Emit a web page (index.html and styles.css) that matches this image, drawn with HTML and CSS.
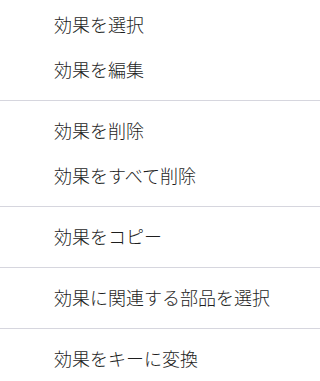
FILE: index.html
```html
<!DOCTYPE html>
<html lang="ja">
<head>
<meta charset="utf-8">
<link rel="stylesheet" href="styles.css">
</head>
<body>
<ul class="menu">
  <li class="item">効果を選択</li>
  <li class="item">効果を編集</li>
  <li class="sep"></li>
  <li class="item">効果を削除</li>
  <li class="item">効果をすべて削除</li>
  <li class="sep"></li>
  <li class="item">効果をコピー</li>
  <li class="sep"></li>
  <li class="item">効果に関連する部品を選択</li>
  <li class="sep"></li>
  <li class="item">効果をキーに変換</li>
</ul>
</body>
</html>
```
FILE: styles.css
```css
html, body {
  margin: 0;
  padding: 0;
  background: #ffffff;
}
.menu {
  list-style: none;
  margin: 0;
  padding: 2px 0 0 0;
  font-family: "Noto Sans CJK JP", "Noto Sans", sans-serif;
  font-size: 18px;
  font-weight: 300;
  color: #1e1e1e;
}
.item {
  height: 45px;
  line-height: 45px;
  padding-left: 54px;
  white-space: nowrap;
}
.sep {
  height: 1px;
  background: #d6d6de;
  margin: 8px 0 7px 0;
}
```
